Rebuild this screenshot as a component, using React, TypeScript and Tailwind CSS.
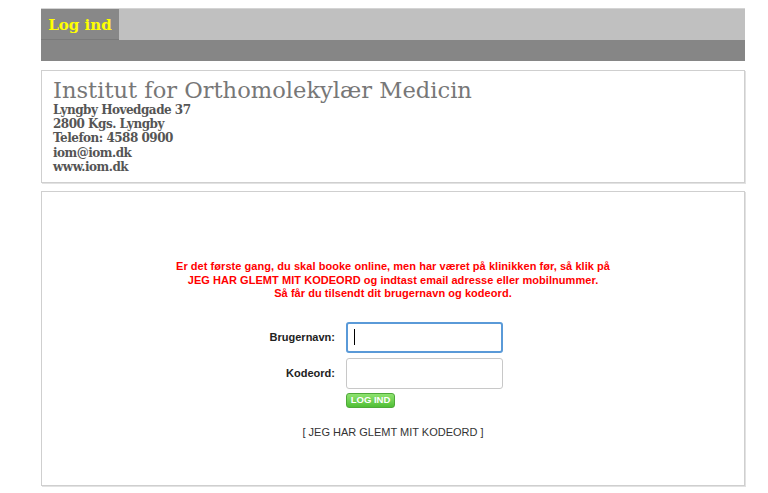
import React from "react";

export default function App() {
  return (
    <div className="min-h-[493px] bg-white pt-[8px]">
      <div className="ml-[41px] w-[704px]">
        {/* nav */}
        <div className="flex h-[32px] border-t border-[#d4d4d4] bg-[#c0c0c0]">
          <div className="flex w-[78px] items-center justify-center border-b border-[#7a7a7a] bg-[#888888] pt-[3px] text-[15px] font-bold text-[#ffff00] [font-family:'DejaVu_Serif',serif]">
            Log ind
          </div>
        </div>
        <div className="h-[21px] bg-[#868686]" />

        {/* header */}
        <div className="mt-[9px] h-[113px] border border-[#cfcfcf] px-[11px] pt-[6px] shadow-[1px_1px_0_#e2e2e2]">
          <div className="text-[22.6px] leading-[26px] text-[#777777] [font-family:'DejaVu_Serif',serif]">
            Institut for Orthomolekylær Medicin
          </div>
          <div className="text-[12px] font-bold leading-[14.2px] text-[#555555] [font-family:'DejaVu_Serif',serif] tracking-[-0.5px]">
            <div>Lyngby Hovedgade 37</div>
            <div>2800 Kgs. Lyngby</div>
            <div>Telefon: 4588 0900</div>
            <div>iom@iom.dk</div>
            <div>www.iom.dk</div>
          </div>
        </div>

        {/* login */}
        <div className="mt-[8px] h-[295px] border border-[#cfcfcf] pt-[68px] shadow-[1px_1px_0_#e2e2e2] [font-family:'Liberation_Sans',Arial,sans-serif]">
          <div className="text-center text-[11px] font-bold leading-[13.5px] tracking-[0.05px] text-[#ff0000]">
            <div>Er det første gang, du skal booke online, men har været på klinikken før, så klik på</div>
            <div>JEG HAR GLEMT MIT KODEORD og indtast email adresse eller mobilnummer.</div>
            <div>Så får du tilsendt dit brugernavn og kodeord.</div>
          </div>

          <div className="mt-[21px] flex flex-col items-start pl-[208px]">
            <div className="flex items-center">
              <div className="w-[90px] pr-[5px] text-right text-[11px] font-bold text-[#222]">Brugernavn:</div>
              <div className="ml-[6px] flex h-[31px] w-[157px] items-center rounded-[3px] border-2 border-[#5a9ad8] bg-white pl-[6px]">
                <div className="h-[16px] w-px bg-black" />
              </div>
            </div>
            <div className="mt-[5px] flex items-center">
              <div className="w-[90px] pr-[5px] text-right text-[11px] font-bold text-[#222]">Kodeord:</div>
              <div className="ml-[6px] h-[31px] w-[157px] rounded-[3px] border border-[#c8c8c8] bg-white" />
            </div>
            <div className="mt-[4px] ml-[96px] flex h-[15px] w-[49px] items-center justify-center rounded-[3px] border border-[#4fa83a] bg-gradient-to-b from-[#8ee36f] to-[#4fbf34] text-[9.5px] font-bold text-white">
              LOG IND
            </div>
          </div>

          <div className="mt-[16px] text-center text-[11px] text-[#333]">
            [ JEG HAR GLEMT MIT KODEORD ]
          </div>
        </div>
      </div>
    </div>
  );
}
